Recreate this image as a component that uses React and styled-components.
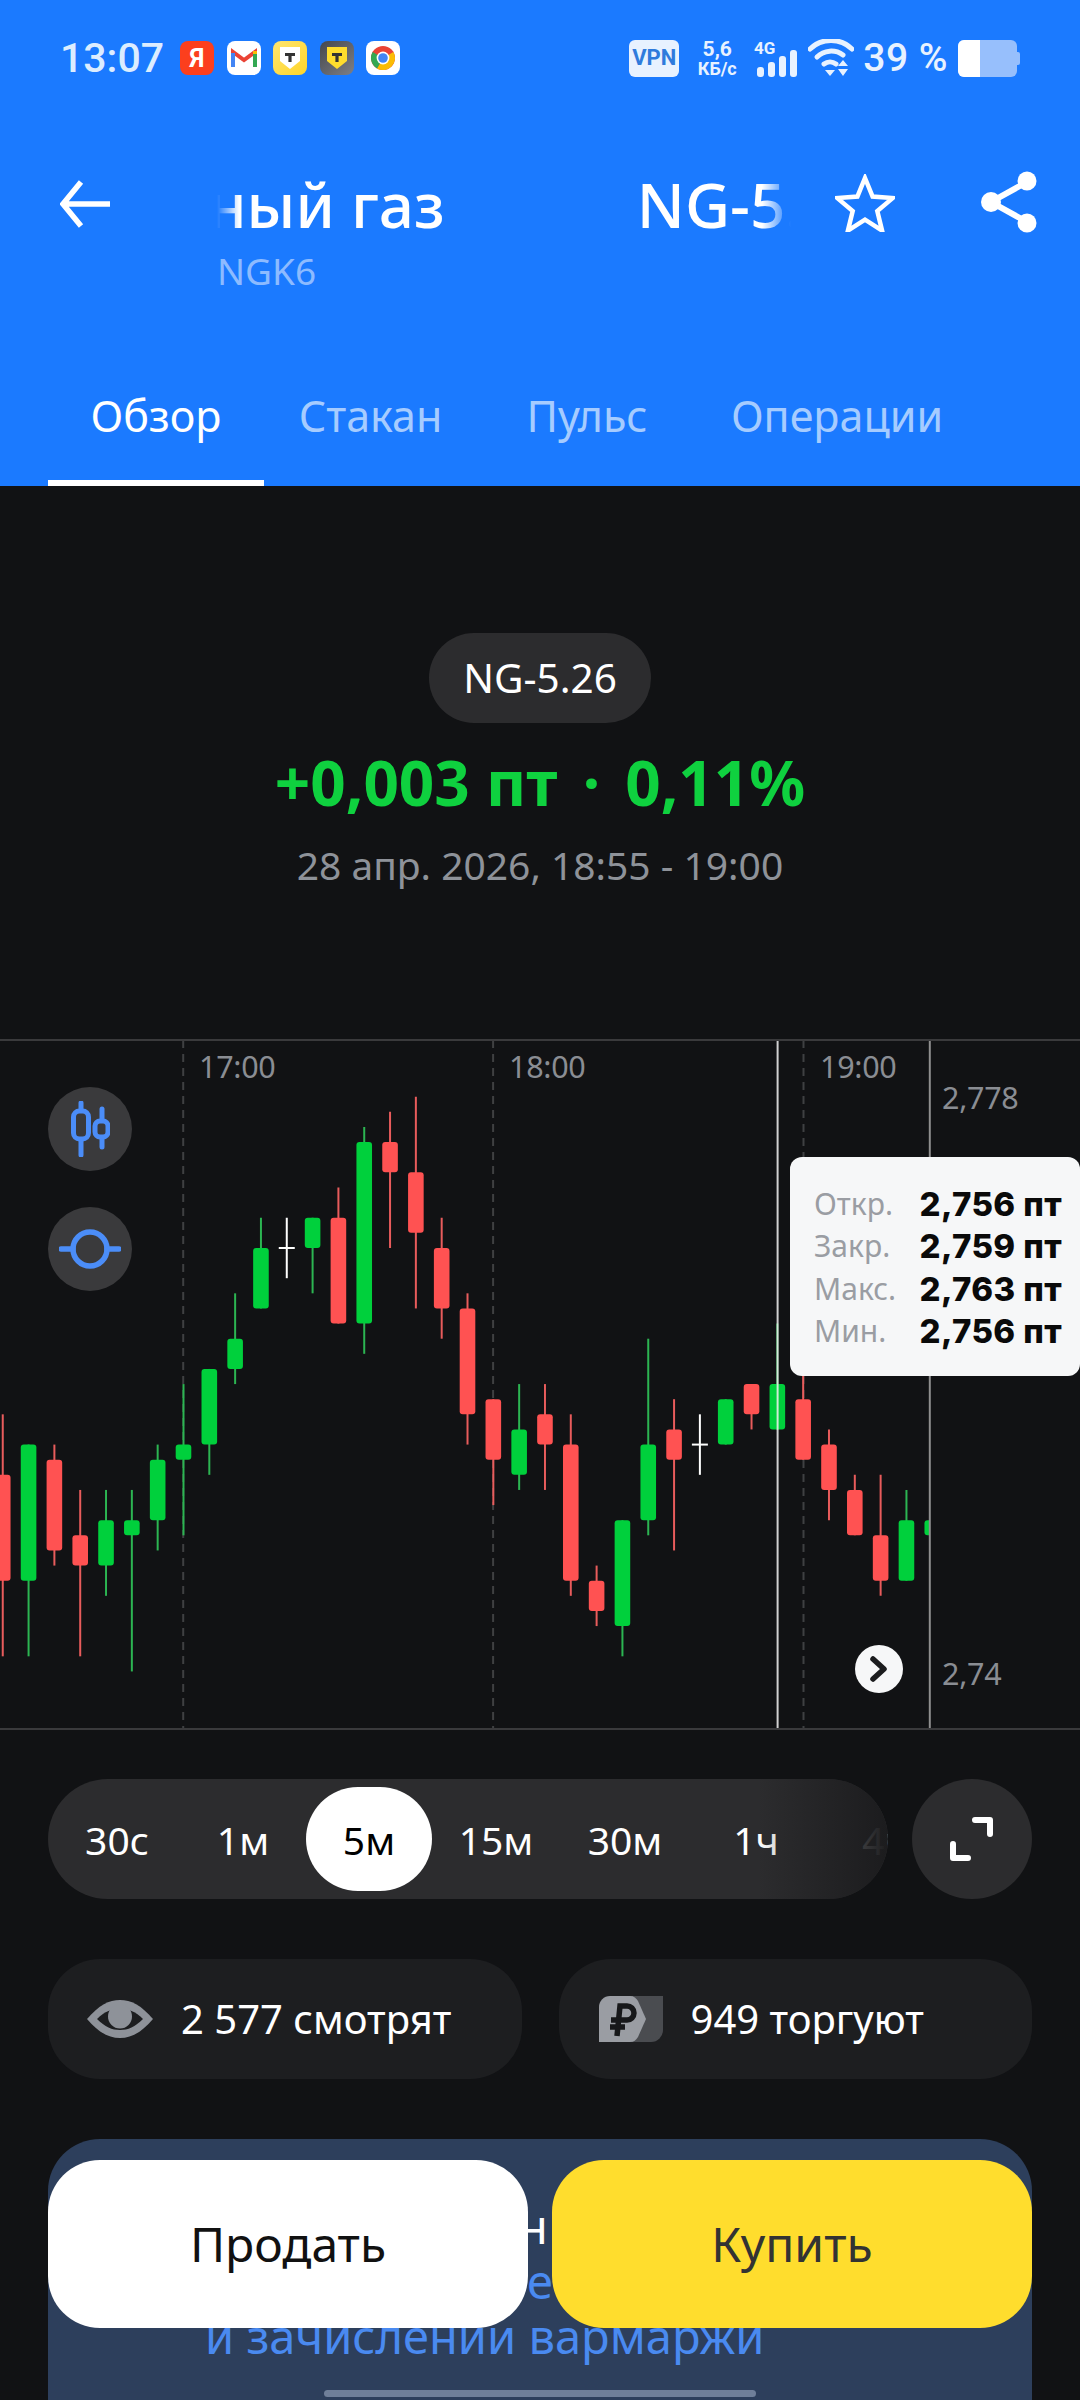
import React from 'react';
import styled, { createGlobalStyle } from 'styled-components';

const Global = createGlobalStyle`
  html, body { margin: 0; padding: 0; background: #111214; }
  #root { width: 1080px; height: 2400px; overflow: hidden; }
  * { box-sizing: border-box; }
`;

const Page = styled.div`
  position: relative;
  width: 1080px;
  height: 2400px;
  overflow: hidden;
  display: flex;
  flex-direction: column;
  background: #111214;
  font-family: "Noto Sans", Roboto, sans-serif;
  color: #fff;
`;

const Header = styled.header`
  height: 486px;
  flex: none;
  display: flex;
  flex-direction: column;
  background: #1b7aff;
`;

const StatusBar = styled.div`
  height: 116px;
  padding: 0 60px;
  display: flex;
  align-items: center;
  justify-content: space-between;
`;

const StatusLeft = styled.div`
  display: flex;
  align-items: center;
`;

const StatusTime = styled.span`
  font: 500 41px/1 Roboto, sans-serif;
  color: #dcedff;
  width: 120px;
`;

const AppIcons = styled.div`
  display: flex;
  gap: 12.5px;
`;

const AppIcon = styled.span`
  width: 34px;
  height: 34px;
  display: flex;
  align-items: center;
  justify-content: center;
  border-radius: 8px;
  overflow: hidden;
  background: ${p => p.$bg};
  font: 700 25px/1 Roboto, sans-serif;
  color: #fff;
`;

const StatusRight = styled.div`
  display: flex;
  align-items: center;
`;

const VpnBadge = styled.span`
  width: 50px;
  height: 37px;
  margin-right: 15px;
  border-radius: 6px;
  background: #e8f2ff;
  color: #2f7bdc;
  display: flex;
  align-items: center;
  justify-content: center;
  font: 700 22px/1 Roboto, sans-serif;
`;

const Speed = styled.span`
  width: 46px;
  margin-right: 14px;
  display: flex;
  flex-direction: column;
  align-items: center;
  color: #e8f2ff;
  font: 700 18px/18px Roboto, sans-serif;
`;

const SpeedTop = styled.span`
  font-size: 21px;
  line-height: 21px;
`;

const Battery = styled.span`
  width: 63px;
  height: 37px;
  margin-left: 9px;
  display: block;
`;

const BatteryPct = styled.span`
  font: 500 39px/1 Roboto, sans-serif;
  color: #e8f2ff;
  letter-spacing: 0.5px;
  margin-left: 9px;
`;

const NavBar = styled.div`
  display: flex;
  align-items: flex-start;
  padding: 52px 46px 0 60px;
`;

const BackIcon = styled.svg`
  width: 50px;
  height: 50px;
  flex: none;
  margin-top: 11px;
  margin-right: 107px;
`;

const TitleCol = styled.div`
  width: 574px;
  flex: none;
`;

const Marquee = styled.div`
  height: 72px;
  overflow: hidden;
  white-space: nowrap;
  mask-image: linear-gradient(90deg, transparent 0, #000 22px, #000 545px, transparent 574px);
  -webkit-mask-image: linear-gradient(90deg, transparent 0, #000 22px, #000 545px, transparent 574px);
`;

const MarqueeText = styled.div`
  font: 500 62px/72px "Noto Sans", sans-serif;
  margin-left: -246px;
  display: flex;
`;

const MarqueeGap = styled.span`
  width: 192px;
  flex: none;
`;

const Ticker = styled.div`
  font: 400 37px/46px "Noto Sans", sans-serif;
  color: #8dbbff;
  margin-top: 8px;
`;

const StarIcon = styled.svg`
  width: 60px;
  height: 58px;
  flex: none;
  margin-left: 44px;
  margin-top: 6px;
`;

const ShareIcon = styled.svg`
  width: 56px;
  height: 62px;
  flex: none;
  margin-left: 86px;
  margin-top: 3px;
`;

const Tabs = styled.nav`
  margin-top: auto;
  padding-left: 48px;
  display: flex;
`;

const Tab = styled.div`
  width: ${p => p.$w}px;
  height: 100px;
  display: flex;
  align-items: center;
  justify-content: center;
  font: 400 43px/1 "Noto Sans", sans-serif;
  color: ${p => (p.$active ? '#fff' : '#a6ccff')};
  border-bottom: 6px solid ${p => (p.$active ? '#fff' : 'transparent')};
  padding-bottom: 36px;
`;

const Hero = styled.section`
  display: flex;
  flex-direction: column;
  align-items: center;
  height: 553px;
  flex: none;
`;

const Pill = styled.div`
  margin-top: 147px;
  width: 222px;
  height: 90px;
  border-radius: 45px;
  background: #2c2c2e;
  display: flex;
  align-items: center;
  justify-content: center;
  font: 400 40.5px/1 "Noto Sans", sans-serif;
`;

const Change = styled.div`
  margin-top: 23px;
  font: 700 62px/72px "Noto Sans", sans-serif;
  color: #0fd13f;
  white-space: pre;
`;

const ChangeDot = styled.span`
  margin: 0 9px;
`;

const DateRange = styled.div`
  margin-top: 23px;
  font: 400 39px/48px "Noto Sans", sans-serif;
  color: #8e9299;
`;

const Chart = styled.section`
  position: relative;
  height: 691px;
  flex: none;
`;

const ChartSvg = styled.svg`
  display: block;
  width: 1080px;
  height: 691px;
`;

const AxisLabel = styled.span`
  position: absolute;
  left: ${p => p.$x}px;
  top: ${p => p.$y}px;
  font: 400 30.5px/36px "Noto Sans", sans-serif;
  color: #8a8d93;
  letter-spacing: -0.3px;
`;

const ChartControl = styled.div`
  position: absolute;
  left: 48px;
  top: ${p => p.$y}px;
  width: 84px;
  height: 84px;
  border-radius: 50%;
  background: #3a3a3c;
  display: flex;
  align-items: center;
  justify-content: center;
`;

const JumpButton = styled.div`
  position: absolute;
  left: 855px;
  top: 606px;
  width: 48px;
  height: 48px;
  border-radius: 50%;
  background: #f6f7f8;
  display: flex;
  align-items: center;
  justify-content: center;
`;

const Tooltip = styled.div`
  position: absolute;
  left: 790px;
  top: 118px;
  width: 290px;
  height: 219px;
  padding: 26px 18px 0 24px;
  background: #f6f7f8;
  border-radius: 12px;
  display: grid;
  grid-template-columns: 1fr auto;
  grid-auto-rows: 42.4px;
  align-content: start;
`;

const TipLabel = styled.span`
  font: 400 30px/42px "Noto Sans", sans-serif;
  color: #9a9da3;
`;

const TipValue = styled.span`
  font: 800 33px/42px Inter, sans-serif;
  letter-spacing: 0.4px;
  color: #0a0a0a;
  text-align: right;
`;

const TimeRow = styled.div`
  margin-top: 49px;
  padding: 0 48px;
  display: flex;
  gap: 24px;
`;

const TimeTrack = styled.div`
  position: relative;
  width: 840px;
  height: 120px;
  padding: 8px 0 8px 6px;
  border-radius: 60px;
  background: #2c2c2e;
  display: flex;
  overflow: hidden;
  &::after {
    content: '';
    position: absolute;
    right: 0;
    top: 0;
    bottom: 0;
    width: 130px;
    background: linear-gradient(90deg, rgba(30,30,32,0), rgba(30,30,32,.82) 72%, rgba(28,28,30,1));
  }
`;

const TimeItem = styled.div`
  flex: none;
  width: ${p => p.$w}px;
  height: 104px;
  border-radius: 52px;
  display: flex;
  align-items: center;
  justify-content: center;
  font: 400 39px/1 "Noto Sans", sans-serif;
  background: ${p => (p.$active ? '#fff' : 'transparent')};
  color: ${p => (p.$active ? '#000' : '#fff')};
`;

const FullButton = styled.div`
  width: 120px;
  height: 120px;
  flex: none;
  border-radius: 50%;
  background: #2c2c2e;
  display: flex;
  align-items: center;
  justify-content: center;
`;

const Stats = styled.div`
  margin-top: 60px;
  padding: 0 48px;
  display: flex;
  gap: 37px;
`;

const StatCard = styled.div`
  width: 474px;
  height: 120px;
  border-radius: 52px;
  background: #1d1e20;
  display: flex;
  align-items: center;
  padding-left: ${p => p.$pad}px;
  gap: ${p => p.$gap}px;
  font: 400 40px/1 "Noto Sans", sans-serif;
`;

const Banner = styled.div`
  margin: 60px 48px 0;
  height: 320px;
  flex: none;
  border-radius: 52px;
  background: #2d3f5c;
  padding-top: 60px;
  font: 400 47px/55px "Noto Sans", sans-serif;
`;

const BannerLine = styled.div`
  color: ${p => (p.$blue ? '#4a8af0' : '#fff')};
  padding-left: ${p => p.$x}px;
`;

const TradeBar = styled.div`
  position: absolute;
  left: 48px;
  top: 2160px;
  width: 984px;
  display: flex;
  gap: 24px;
`;

const TradeButton = styled.div`
  flex: 1;
  height: 168px;
  border-radius: 52px;
  background: ${p => (p.$buy ? '#ffdd2d' : '#fff')};
  color: ${p => (p.$buy ? '#333' : '#111')};
  display: flex;
  align-items: center;
  justify-content: center;
  font: 400 48px/1 "Noto Sans", sans-serif;
`;

const HomeBar = styled.div`
  position: absolute;
  left: 324px;
  top: 2390px;
  width: 432px;
  height: 7px;
  border-radius: 4px;
  background: #6f7f99;
`;

const STEP = 15.125;
const L = n => 1096.7 + STEP * n;
const X = i => 2.75 + 25.82 * i;
const G = '#00d03c', R = '#ff5252', GW = '#2cb552', RW = '#e85c5c';

// [colour, wickTop, bodyTop, bodyBottom, wickBottom] in price levels
const CANDLES = [
  ['r', 21, 25, 32, 37], ['g', 23, 23, 32, 37], ['r', 23, 24, 30, 31], ['r', 26, 29, 31, 37],
  ['g', 26, 28, 31, 33], ['g', 26, 28, 29, 38], ['g', 23, 24, 28, 30], ['g', 19, 23, 24, 29],
  ['g', 18, 18, 23, 25], ['g', 13, 16, 18, 19], ['g', 8, 10, 14, 14], ['w', 8, 10, 10, 12],
  ['g', 8, 8, 10, 13], ['r', 6, 8, 15, 15], ['g', 2, 3, 15, 17], ['r', 1, 3, 5, 10],
  ['r', 0, 5, 9, 14], ['r', 8, 10, 14, 16], ['r', 13, 14, 21, 23], ['r', 20, 20, 24, 27],
  ['g', 19, 22, 25, 26], ['r', 19, 21, 23, 26], ['r', 21, 23, 32, 33], ['r', 31, 32, 34, 35],
  ['g', 28, 28, 35, 37], ['g', 16, 23, 28, 29], ['r', 20, 22, 24, 30], ['w', 21, 23, 23, 25],
  ['g', 20, 20, 23, 23], ['r', 19, 19, 21, 22], ['g', 15, 19, 22, 22], ['r', 17, 20, 24, 24],
  ['r', 22, 23, 26, 28], ['r', 25, 26, 29, 29], ['r', 25, 29, 32, 33], ['g', 26, 28, 32, 32],
  ['g', 28, 28, 29, 29],
];

const Candle = ({ c, i }) => {
  const x = X(i);
  const [kind, wt, bt, bb, wb] = c;
  if (kind === 'w') {
    return (
      <g stroke="#fff" strokeWidth="2">
        <line x1={x} x2={x} y1={L(wt)} y2={L(wb)} />
        <line x1={x - 8} x2={x + 8} y1={L(bt)} y2={L(bt)} />
      </g>
    );
  }
  return (
    <g>
      <line x1={x} x2={x} y1={L(wt)} y2={L(wb)} stroke={kind === 'g' ? GW : RW} strokeWidth="2" />
      <rect x={x - 7.8} width="15.6" y={L(bt)} height={L(bb) - L(bt)} rx="3" fill={kind === 'g' ? G : R} />
    </g>
  );
};

const CandleChart = () => (
  <ChartSvg viewBox="0 1039 1080 691">
    <defs>
      <clipPath id="plot"><rect x="0" y="1039" width="929.8" height="691" /></clipPath>
    </defs>
    {[183.2, 493.1, 803.5].map(x => (
      <line key={x} x1={x} x2={x} y1="1040" y2="1729" stroke="#3f4042" strokeWidth="2" strokeDasharray="8 6" />
    ))}
    <g clipPath="url(#plot)">
      {CANDLES.map((c, i) => <Candle key={i} c={c} i={i} />)}
    </g>
    <line x1="777.6" x2="777.6" y1="1040" y2="1729" stroke="#f2f2f2" strokeOpacity=".85" strokeWidth="2" />
    <line x1="929.8" x2="929.8" y1="1040" y2="1729" stroke="#8f8f8f" strokeWidth="2" />
    <line x1="0" x2="1080" y1="1040" y2="1040" stroke="#3a3a3c" strokeWidth="2" />
    <line x1="0" x2="1080" y1="1729" y2="1729" stroke="#3a3a3c" strokeWidth="2" />
  </ChartSvg>
);

const CHEVRON = 'M-6 -10 L5 0 L-6 10';

export default function App() {
  const times = [['30с', 126], ['1м', 126], ['5м', 126, true], ['15м', 128], ['30м', 130], ['1ч', 132], ['4ч', 126]];
  const tips = [['Откр.', '2,756 пт'], ['Закр.', '2,759 пт'], ['Макс.', '2,763 пт'], ['Мин.', '2,756 пт']];
  return (
    <Page>
      <Global />
      <Header>
        <StatusBar>
          <StatusLeft>
            <StatusTime>13:07</StatusTime>
            <AppIcons>
              <AppIcon $bg="#fc3f1d">Я</AppIcon>
              <AppIcon $bg="#fff">
                <svg width="26" height="22" viewBox="0 0 26 22">
                  <path d="M2 20V5l11 8 11-8v15" fill="none" stroke="#ea4335" strokeWidth="4" />
                  <path d="M2 20V6" stroke="#4285f4" strokeWidth="4" />
                  <path d="M24 20V6" stroke="#34a853" strokeWidth="4" />
                  <path d="M24 7V4" stroke="#fbbc04" strokeWidth="4" />
                </svg>
              </AppIcon>
              <AppIcon $bg="linear-gradient(135deg,#ffe570,#ffd528)">
                <svg width="22" height="24" viewBox="0 0 22 24">
                  <path d="M1 1h20v14l-10 8-10-8z" fill="#fff" />
                  <path d="M6 7h10v3h-3.4v6h-3.2v-6H6z" fill="#333" />
                </svg>
              </AppIcon>
              <AppIcon $bg="linear-gradient(135deg,#45474c,#7d7f86)">
                <svg width="22" height="24" viewBox="0 0 22 24">
                  <path d="M1 1h20v14l-10 8-10-8z" fill="#ffdd2d" />
                  <path d="M6 7h10v3h-3.4v6h-3.2v-6H6z" fill="#333" />
                </svg>
              </AppIcon>
              <AppIcon $bg="#fff">
                <svg width="26" height="26" viewBox="0 0 26 26">
                  <circle cx="13" cy="13" r="12" fill="#ea4335" />
                  <path d="M13 13 L23.4 7 A12 12 0 0 1 7 23.4Z" fill="#fbbc04" />
                  <path d="M13 13 L7 23.4 A12 12 0 0 1 2.6 7Z" fill="#34a853" />
                  <circle cx="13" cy="13" r="6.4" fill="#fff" />
                  <circle cx="13" cy="13" r="4.8" fill="#4285f4" />
                </svg>
              </AppIcon>
            </AppIcons>
          </StatusLeft>
          <StatusRight>
            <VpnBadge>VPN</VpnBadge>
            <Speed><SpeedTop>5,6</SpeedTop>КБ/с</Speed>
            <svg width="44" height="38" viewBox="0 0 44 38">
              <text x="0" y="15" fontFamily="Roboto" fontWeight="700" fontSize="17" fill="#e8f2ff">4G</text>
              <rect x="3" y="28" width="7" height="10" rx="3" fill="#e8f2ff" />
              <rect x="14" y="23" width="7" height="15" rx="3" fill="#e8f2ff" />
              <rect x="25" y="17" width="7" height="21" rx="3" fill="#e8f2ff" />
              <rect x="36" y="11" width="7" height="27" rx="3" fill="#e8f2ff" />
            </svg>
            <svg width="46" height="38" viewBox="0 0 46 38" style={{ marginLeft: 10 }}>
              <path d="M2 10 A30 30 0 0 1 44 10" fill="none" stroke="#e8f2ff" strokeWidth="5" strokeLinecap="round" />
              <path d="M9 18 A20 20 0 0 1 35 16" fill="none" stroke="#e8f2ff" strokeWidth="5" strokeLinecap="round" />
              <path d="M16 25 A10 10 0 0 1 28 25" fill="none" stroke="#e8f2ff" strokeWidth="5" strokeLinecap="round" />
              <path d="M17 31h10l-5 6z" fill="#e8f2ff" />
              <path d="M35 21l5 6h-10zM35 37l-5-7h10z" fill="#e8f2ff" />
            </svg>
            <BatteryPct>39 %</BatteryPct>
            <Battery>
              <svg width="63" height="37" viewBox="0 0 63 37">
                <path d="M7 0h47a6 6 0 0 1 6 6v25a6 6 0 0 1-6 6H7a6 6 0 0 1-6-6V6a6 6 0 0 1 6-6z" fill="#97bffc" />
                <path d="M60 12h1a2 2 0 0 1 2 2v9a2 2 0 0 1-2 2h-1z" fill="#97bffc" />
                <path d="M7 0h16v37H7a6 6 0 0 1-6-6V6a6 6 0 0 1 6-6z" fill="#fff" />
              </svg>
            </Battery>
          </StatusRight>
        </StatusBar>
        <NavBar>
          <BackIcon viewBox="0 0 50 50">
            <path d="M50 25H4M21 3 3 25l18 22" fill="none" stroke="#fff" strokeWidth="5.5" />
          </BackIcon>
          <TitleCol>
            <Marquee>
              <MarqueeText>Природный газ<MarqueeGap />NG-5.26</MarqueeText>
            </Marquee>
            <Ticker>NGK6</Ticker>
          </TitleCol>
          <StarIcon viewBox="0 0 60 58">
            <path d="M30 4l7.6 18.6 20 1.5-15.3 13 4.8 19.5L30 45.6 12.9 56.6l4.8-19.5-15.3-13 20-1.5z" fill="none" stroke="#fff" strokeWidth="4.5" strokeLinejoin="miter" />
          </StarIcon>
          <ShareIcon viewBox="0 0 56 62">
            <path d="M46 11 10 31l36 20" fill="none" stroke="#fff" strokeWidth="6" />
            <circle cx="46" cy="10" r="9.5" fill="#fff" />
            <circle cx="10" cy="31" r="10" fill="#fff" />
            <circle cx="46" cy="52" r="9.5" fill="#fff" />
          </ShareIcon>
        </NavBar>
        <Tabs>
          <Tab $w={216} $active>Обзор</Tab>
          <Tab $w={213}>Стакан</Tab>
          <Tab $w={220}>Пульс</Tab>
          <Tab $w={280}>Операции</Tab>
        </Tabs>
      </Header>

      <Hero>
        <Pill>NG-5.26</Pill>
        <Change>+0,003 пт<ChangeDot> · </ChangeDot>0,11%</Change>
        <DateRange>28 апр. 2026, 18:55 - 19:00</DateRange>
      </Hero>

      <Chart>
        <CandleChart />
        <AxisLabel $x={199} $y={9}>17:00</AxisLabel>
        <AxisLabel $x={509} $y={9}>18:00</AxisLabel>
        <AxisLabel $x={820} $y={9}>19:00</AxisLabel>
        <AxisLabel $x={942} $y={40}>2,778</AxisLabel>
        <AxisLabel $x={942} $y={616}>2,74</AxisLabel>
        <ChartControl $y={48}>
          <svg width="40" height="56" viewBox="0 0 40 56">
            <path d="M11 2v52" stroke="#4b8df8" strokeWidth="5" strokeLinecap="round" />
            <rect x="3.5" y="10" width="15" height="28" rx="6" fill="#3a3a3c" stroke="#4b8df8" strokeWidth="5" />
            <path d="M32 8v38" stroke="#4b8df8" strokeWidth="5" strokeLinecap="round" />
            <rect x="25" y="20" width="13" height="16" rx="5" fill="#3a3a3c" stroke="#4b8df8" strokeWidth="5" />
          </svg>
        </ChartControl>
        <ChartControl $y={168}>
          <svg width="62" height="42" viewBox="0 0 62 42">
            <circle cx="31" cy="21" r="17" fill="none" stroke="#4b8df8" strokeWidth="5.5" />
            <path d="M2 21h12M48 21h12" stroke="#4b8df8" strokeWidth="5.5" strokeLinecap="round" />
          </svg>
        </ChartControl>
        <JumpButton>
          <svg width="24" height="28" viewBox="-12 -14 24 28">
            <path d={CHEVRON} fill="none" stroke="#1b1c1e" strokeWidth="5.5" strokeLinecap="round" strokeLinejoin="round" />
          </svg>
        </JumpButton>
        <Tooltip>
          {tips.map(([k, v]) => (
            <React.Fragment key={k}>
              <TipLabel>{k}</TipLabel>
              <TipValue>{v}</TipValue>
            </React.Fragment>
          ))}
        </Tooltip>
      </Chart>

      <TimeRow>
        <TimeTrack>
          {times.map(([t, w, a]) => <TimeItem key={t} $w={w} $active={a}>{t}</TimeItem>)}
        </TimeTrack>
        <FullButton>
          <svg width="44" height="44" viewBox="0 0 44 44">
            <path d="M25 3h15v14M3 27v14h15" fill="none" stroke="#fff" strokeWidth="6" strokeLinecap="round" strokeLinejoin="round" />
          </svg>
        </FullButton>
      </TimeRow>

      <Stats>
        <StatCard $pad={39} $gap={28}>
          <svg width="66" height="38" viewBox="0 0 66 38">
            <path d="M0 19C12 5 22 0 33 0s21 5 33 19C54 33 44 38 33 38S12 33 0 19z" fill="#8e9299" />
            <path d="M10 19c8-8 15-10 23-10s15 2 23 10c-8 8-15 11-23 11s-15-3-23-11z" fill="#1d1e20" />
            <circle cx="33" cy="16.5" r="12" fill="#8e9299" />
          </svg>
          2 577 смотрят
        </StatCard>
        <StatCard $pad={40} $gap={28}>
          <svg width="64" height="46" viewBox="0 0 64 46">
            <path d="M28 0h36v34a12 12 0 0 1-12 12H28z" fill="#4a4c50" />
            <path d="M11 0h20c4 0 6 2 8 5l8 18-8 18c-2 3-4 5-8 5H0V11A11 11 0 0 1 11 0z" fill="#9a9da3" />
            <path d="M18 40l3-30h7a6.5 6.5 0 0 1 0 14H12M11 31h15" fill="none" stroke="#17181a" strokeWidth="5.5" />
          </svg>
          949 торгуют
        </StatCard>
      </Stats>

      <Banner>
        <BannerLine $x={471}>н</BannerLine>
        <BannerLine $x={479} $blue>е</BannerLine>
        <BannerLine $x={157} $blue>и зачислении вармаржи</BannerLine>
      </Banner>

      <TradeBar>
        <TradeButton>Продать</TradeButton>
        <TradeButton $buy>Купить</TradeButton>
      </TradeBar>
      <HomeBar />
    </Page>
  );
}
